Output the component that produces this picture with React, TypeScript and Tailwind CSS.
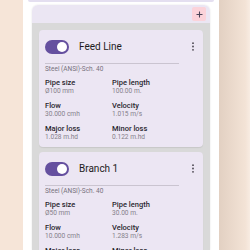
import React from "react";

function Toggle() {
  return (
    <div className="relative h-[14px] w-[24px] shrink-0 rounded-full bg-[#65509f]">
      <div className="absolute right-[2px] top-[2px] h-[10px] w-[10px] rounded-full bg-white" />
    </div>
  );
}

function Dots() {
  return (
    <svg width="4" height="9" viewBox="0 0 4 9" className="shrink-0">
      <circle cx="2" cy="1.2" r="0.9" fill="#49454f" />
      <circle cx="2" cy="4.5" r="0.9" fill="#49454f" />
      <circle cx="2" cy="7.8" r="0.9" fill="#49454f" />
    </svg>
  );
}

function Item({ label, value }: { label: string; value: string }) {
  return (
    <div className="flex flex-col">
      <div className="text-[7.5px] leading-[9px] font-medium text-[#2a2730]">{label}</div>
      <div className="text-[6.6px] leading-[9px] text-[#85808a]">{value}</div>
    </div>
  );
}

function Card({
  title,
  size,
  length,
  flow,
  velocity,
  major,
  minor,
}: {
  title: string;
  size: string;
  length: string;
  flow: string;
  velocity: string;
  major: string;
  minor: string;
}) {
  return (
    <div className="rounded-[4px] bg-[#ece6f3] pl-[6px] pb-[5px] shadow-[0_1px_1px_rgba(0,0,0,0.08)]">
      <div className="flex h-[33px] items-center pr-[8px]">
        <Toggle />
        <div className="ml-[10px] flex-1 text-[10px] text-[#1d1b20]">{title}</div>
        <Dots />
      </div>
      <div className="h-[1px] w-[134px] bg-[#cac4d0]" />
      <div className="mt-[1px] text-[6.5px] leading-[8px] text-[#77727d]">Steel (ANSI)-Sch. 40</div>
      <div className="mt-[5px] grid grid-cols-[67px_67px] gap-y-[5px]">
        <Item label="Pipe size" value={size} />
        <Item label="Pipe length" value={length} />
        <Item label="Flow" value={flow} />
        <Item label="Velocity" value={velocity} />
        <Item label="Major loss" value={major} />
        <Item label="Minor loss" value={minor} />
      </div>
    </div>
  );
}

export default function App() {
  return (
    <div
      className="flex h-[250px] w-[250px] overflow-hidden bg-[#f6e5d8]"
      style={{ fontFamily: "Roboto, 'Noto Sans', sans-serif" }}
    >
      <div className="w-[23px] shrink-0 bg-[#f6e5d8]" />
      <div className="flex w-[196px] shrink-0 flex-col bg-white">
        <div className="mx-[5px] h-[2px] rounded-b-[3px] bg-[#e4dff0]" />
        <div className="mx-[9px] mt-[3px] flex flex-1 flex-col overflow-hidden rounded-t-[6px] shadow-[0_0_2px_rgba(0,0,0,0.12)]">
          <div className="flex h-[18px] shrink-0 items-center justify-end bg-[#ebe6f3] pr-[4px]">
            <div className="flex h-[14px] w-[14px] items-center justify-center rounded-[2px] bg-[#fbd3da]">
              <svg width="7" height="7" viewBox="0 0 7 7">
                <path d="M3.5 0.5V6.5M0.5 3.5H6.5" stroke="#4a4458" strokeWidth="1.1" />
              </svg>
            </div>
          </div>
          <div className="flex flex-1 flex-col gap-[5px] bg-[#d9d9d9] px-[7px] pt-[7px]">
            <Card
              title="Feed Line"
              size="Ø100 mm"
              length="100.00 m."
              flow="30.000 cmh"
              velocity="1.015 m/s"
              major="1.028 m.hd"
              minor="0.122 m.hd"
            />
            <Card
              title="Branch 1"
              size="Ø50 mm"
              length="30.00 m."
              flow="10.000 cmh"
              velocity="1.283 m/s"
              major="3.110 m.hd"
              minor="0.240 m.hd"
            />
          </div>
        </div>
      </div>
      <div className="flex-1 bg-[linear-gradient(to_right,#e2d0c2,#f3e3d6_85%,#f8ece2)]" />
    </div>
  );
}
